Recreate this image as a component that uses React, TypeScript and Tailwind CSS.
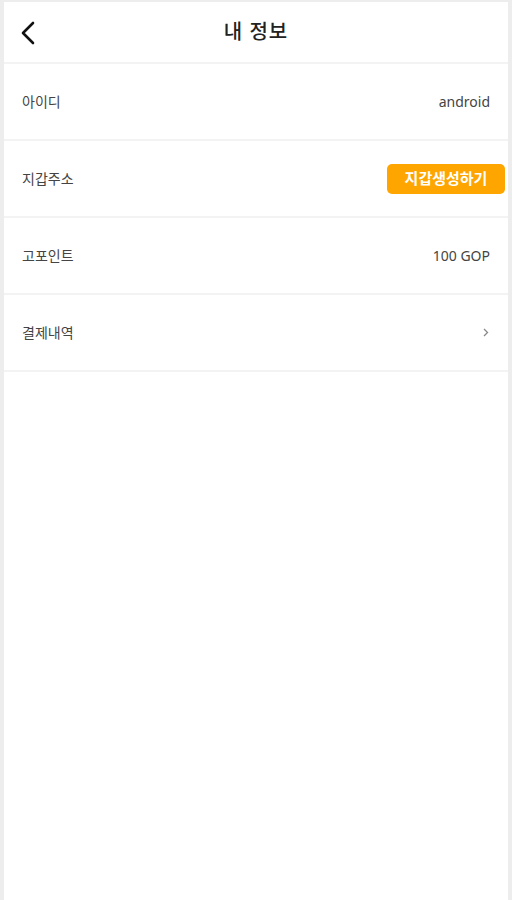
const font = { fontFamily: '"Noto Sans", "Noto Sans CJK KR", sans-serif' };

const Row = ({ label, children }: { label: string; children?: React.ReactNode }) => (
  <div className="flex h-[77px] items-center justify-between border-b-2 border-[#f3f3f3] pl-[18px] pr-[18px]">
    <span className="text-[14px] text-[#444]">{label}</span>
    {children}
  </div>
);

const App = () => {
  return (
    <div className="min-h-screen bg-[#ededed] px-[4px] pt-[2px]" style={font}>
      <div className="flex min-h-[898px] flex-col bg-white">
        {/* Header */}
        <div className="relative flex h-[62px] items-center justify-center border-b-2 border-[#f3f3f3]">
          <button className="absolute left-[12px] top-[15px] p-1">
            <svg width="16" height="26" viewBox="0 0 16 26" fill="none">
              <polyline points="13,2 3,12 13,22" stroke="#111" strokeWidth="2.6" strokeLinecap="round" strokeLinejoin="round" />
            </svg>
          </button>
          <h1 className="text-[20px] font-medium tracking-[1px] text-[#222]">내 정보</h1>
        </div>

        {/* Info rows */}
        <Row label="아이디">
          <span className="text-[14px] text-[#444]">android</span>
        </Row>
        <div className="flex h-[77px] items-center justify-between border-b-2 border-[#f3f3f3] pl-[18px] pr-[3px]">
          <span className="text-[14px] text-[#444]">지갑주소</span>
          <button className="flex h-[30px] w-[118px] items-center justify-center rounded-[5px] bg-[#ffa500] text-[15px] font-bold text-white">
            지갑생성하기
          </button>
        </div>
        <Row label="고포인트">
          <span className="text-[14px] text-[#444]">100 GOP</span>
        </Row>
        <Row label="결제내역">
          <svg width="6" height="9" viewBox="0 0 6 9" fill="none" className="mr-[1px]">
            <polyline points="1,1 4.5,4.5 1,8" stroke="#888" strokeWidth="1.3" />
          </svg>
        </Row>
      </div>
    </div>
  );
};

export default App;
